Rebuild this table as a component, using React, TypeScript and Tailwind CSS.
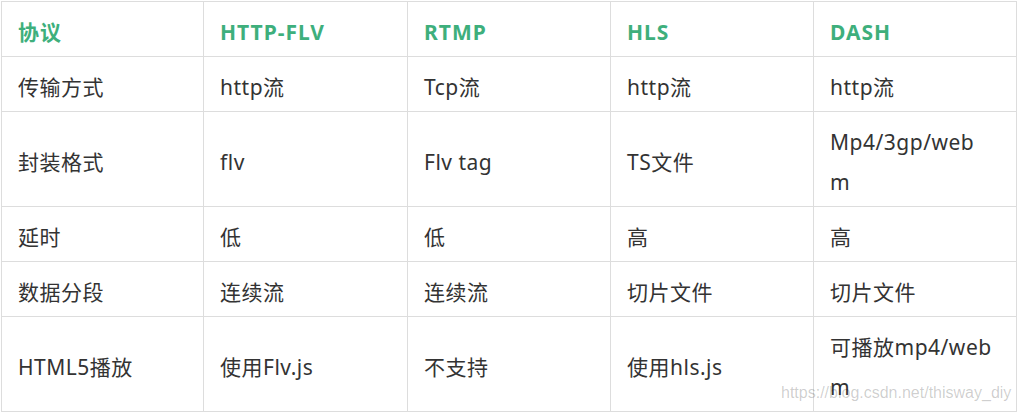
import React from "react";

const headers = ["协议", "HTTP-FLV", "RTMP", "HLS", "DASH"];
const rows: string[][] = [
  ["传输方式", "http流", "Tcp流", "http流", "http流"],
  ["封装格式", "flv", "Flv tag", "TS文件", "Mp4/3gp/web\nm"],
  ["延时", "低", "低", "高", "高"],
  ["数据分段", "连续流", "连续流", "切片文件", "切片文件"],
  ["HTML5播放", "使用Flv.js", "不支持", "使用hls.js", "可播放mp4/web\nm"],
];

export default function App() {
  return (
    <div className="relative w-[1018px] h-[413px] bg-white overflow-hidden">
      <div className="pt-[1px] pl-[1px]">
        <table
          className="table-fixed border-collapse w-[1015px] text-[21px] leading-[40px] tracking-[0.5px] text-[#333]"
          style={{ fontFamily: '"Noto Sans", "Noto Sans CJK SC", sans-serif' }}
        >
          <colgroup>
            <col className="w-[202px]" />
            <col className="w-[204px]" />
            <col className="w-[203px]" />
            <col className="w-[203px]" />
            <col className="w-[203px]" />
          </colgroup>
          <thead>
            <tr>
              {headers.map((h) => (
                <th
                  key={h}
                  className="border border-[#dddddd] text-left font-bold text-[#3eaf7c] tracking-[1px] pl-[16px] pr-[12px] pt-[10px] pb-[4px]"
                >
                  {h}
                </th>
              ))}
            </tr>
          </thead>
          <tbody>
            {rows.map((r, i) => (
              <tr key={i}>
                {r.map((c, j) => (
                  <td
                    key={j}
                    className="border border-[#dddddd] whitespace-pre-line align-middle pl-[16px] pr-[12px] pt-[10px] pb-[4px]"
                  >
                    {c}
                  </td>
                ))}
              </tr>
            ))}
          </tbody>
        </table>
      </div>
      <span
        className="absolute left-[781px] top-[383px] text-[16px] leading-[20px] text-black/20 whitespace-nowrap"
        style={{ fontFamily: '"Liberation Sans", Arial, sans-serif' }}
      >
        https://blog.csdn.net/thisway_diy
      </span>
    </div>
  );
}
